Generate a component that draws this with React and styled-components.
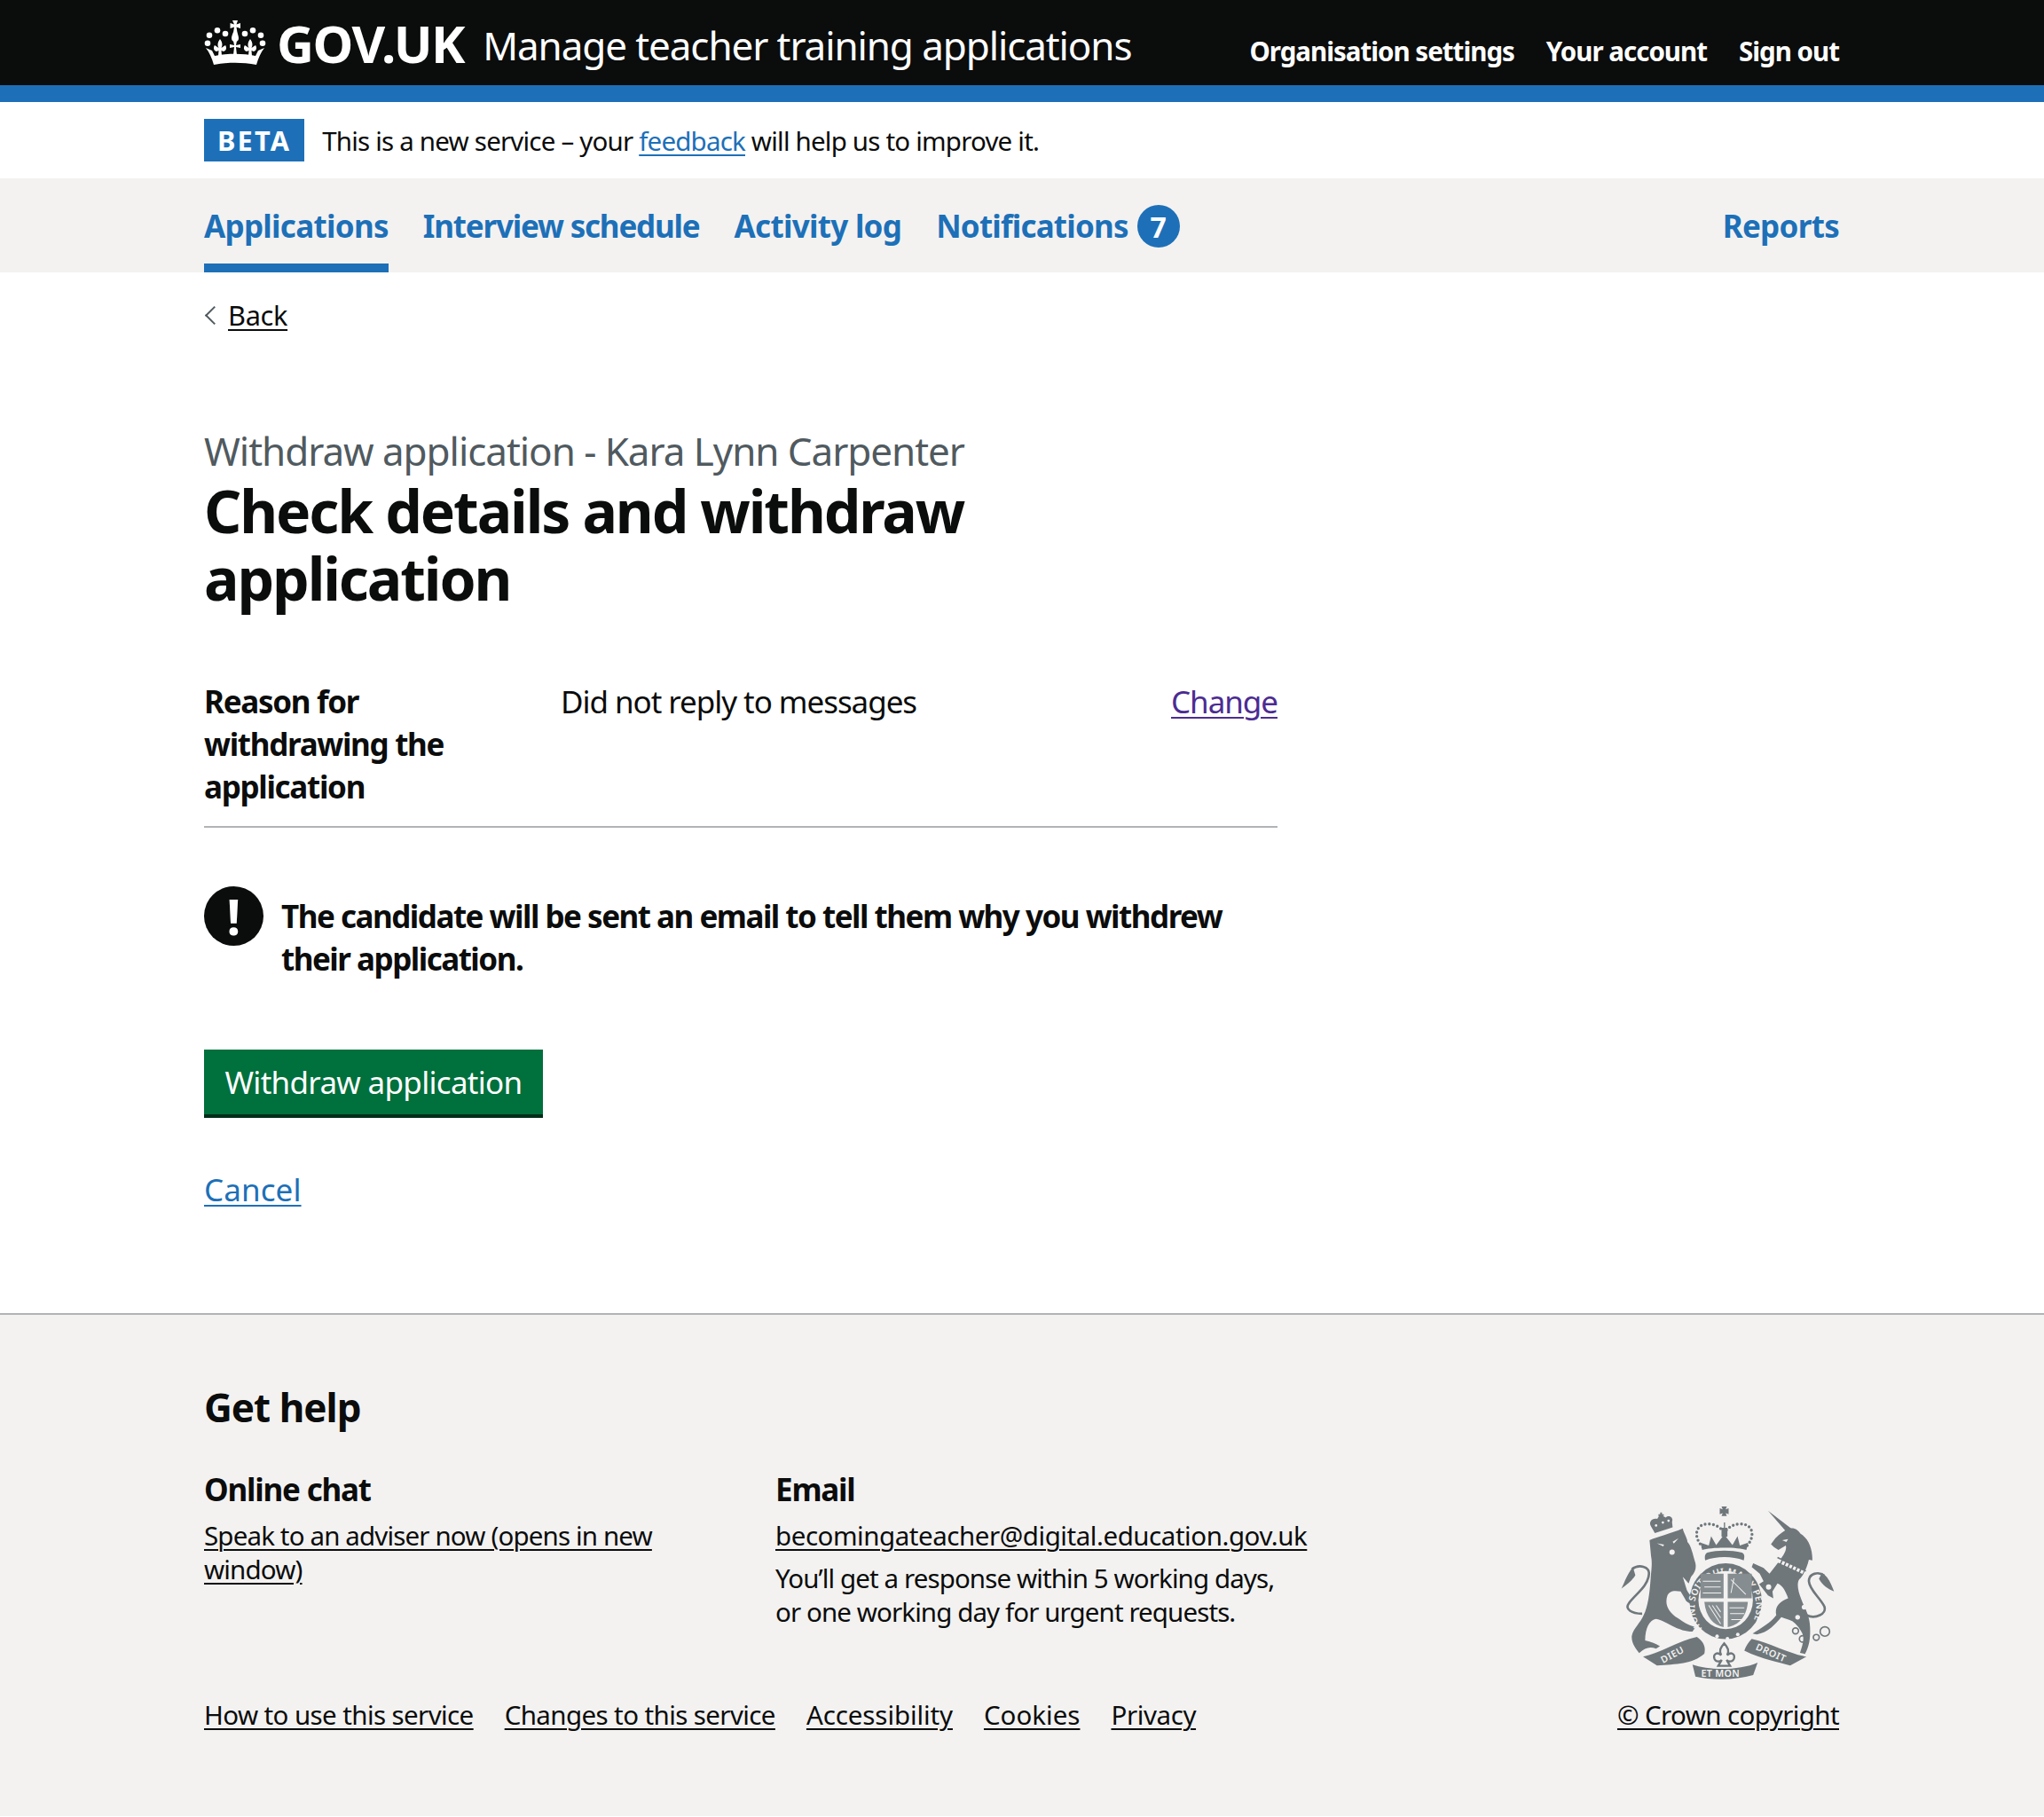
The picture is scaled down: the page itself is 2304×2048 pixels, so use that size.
import React from 'react';
import styled, { createGlobalStyle } from 'styled-components';

const GlobalStyle = createGlobalStyle`
  html, body {
    margin: 0;
    padding: 0;
    background: #fff;
    color: #0b0c0c;
    font-family: "Noto Sans", "Liberation Sans", sans-serif;
  }
`;

const Container = styled.div`
  width: 1843px;
  margin: 0 231px 0 230px;
`;

const Header = styled.header`
  background: #0b0c0c;
  border-bottom: 19px solid #1d70b8;
  height: 96px;
`;

const HeaderInner = styled(Container)`
  display: flex;
  align-items: center;
  height: 96px;
`;

const Logo = styled.div`
  display: flex;
  align-items: center;
  gap: 12px;
  color: #fff;
`;

const LogoText = styled.span`
  font-size: 58px;
  font-weight: 700;
  letter-spacing: -1.4px;
`;

const ServiceName = styled.span`
  color: #fff;
  font-size: 44px;
  letter-spacing: -1.1px;
  margin-left: 21px;
  padding-top: 6px;
`;

const HeaderNav = styled.nav`
  margin-left: auto;
  display: flex;
  gap: 36px;
  padding-top: 18px;
`;

const HeaderLink = styled.a`
  color: #fff;
  font-size: 29.5px;
  font-weight: 700;
  letter-spacing: -1px;
`;

const PhaseBanner = styled.div`
  height: 86px;
`;

const PhaseInner = styled(Container)`
  display: flex;
  align-items: center;
  gap: 20px;
  height: 86px;
`;

const PhaseTag = styled.strong`
  background: #1d70b8;
  color: #fff;
  font-size: 30.7px;
  letter-spacing: 2.2px;
  line-height: 48px;
  padding: 0 15px;
`;

const PhaseText = styled.span`
  font-size: 29.5px;
  letter-spacing: -0.8px;
`;

const TextLink = styled.a`
  color: ${(p) => p.$color || '#1d70b8'};
  text-decoration: underline;
  text-underline-offset: 4px;
  text-decoration-thickness: 2px;
`;

const PrimaryNav = styled.nav`
  background: #f3f2f1;
  height: 106px;
`;

const NavInner = styled(Container)`
  display: flex;
  gap: 39px;
  height: 106px;
`;

const NavItem = styled.a`
  display: flex;
  align-items: center;
  gap: 10px;
  height: 106px;
  box-sizing: border-box;
  color: #1d70b8;
  font-size: 35px;
  font-weight: 700;
  letter-spacing: ${(p) => p.$spacing || '-0.7px'};
  box-shadow: ${(p) => (p.$active ? 'inset 0 -10px 0 #1d70b8' : 'none')};
  margin-left: ${(p) => (p.$right ? 'auto' : '0')};
`;

const Badge = styled.span`
  width: 48px;
  height: 48px;
  margin-top: 2px;
  border-radius: 50%;
  background: #1d70b8;
  color: #fff;
  font-size: 32px;
  letter-spacing: 0;
  display: flex;
  align-items: center;
  justify-content: center;
`;

const BackLink = styled.a`
  display: flex;
  align-items: center;
  gap: 8px;
  height: 40px;
  margin-top: 28px;
  font-size: 30.7px;
  letter-spacing: -0.3px;
  color: #0b0c0c;
  text-decoration: underline;
  text-underline-offset: 4px;
  text-decoration-thickness: 2px;
`;

const Chevron = styled.span`
  width: 15px;
  height: 15px;
  margin-left: 4px;
  box-sizing: border-box;
  border-left: 2px solid #505a5f;
  border-bottom: 2px solid #505a5f;
  transform: rotate(45deg);
`;

const Main = styled.main`
  width: 1210px;
  padding-top: 105px;
  padding-bottom: 115px;
`;

const Caption = styled.span`
  display: block;
  color: #505a5f;
  font-size: 44px;
  letter-spacing: -1.05px;
  line-height: 56px;
`;

const Heading = styled.h1`
  margin: 1px 0 0;
  font-size: 66px;
  line-height: 76px;
  font-weight: 700;
  letter-spacing: -2.1px;
`;

const SummaryRow = styled.div`
  margin-top: 78px;
  display: grid;
  grid-template-columns: 402px 1fr auto;
  font-size: 35px;
  letter-spacing: -1.05px;
  line-height: 48px;
  padding-bottom: 20px;
  border-bottom: 2px solid #b1b4b6;
`;

const SummaryKey = styled.strong`
  padding-right: 40px;
  letter-spacing: -1.3px;
`;

const WarningText = styled.div`
  margin-top: 66px;
  display: flex;
  gap: 20px;
  font-size: 35px;
  line-height: 48px;
  font-weight: 700;
  letter-spacing: -1.5px;
`;

const WarningBody = styled.span`
  padding-top: 10px;
`;

const WarningIcon = styled.span`
  flex: none;
  width: 67px;
  height: 67px;
  border-radius: 50%;
  background: #0b0c0c;
  color: #fff;
  font-size: 56px;
  line-height: 67px;
  letter-spacing: 0;
  text-align: center;
`;

const PrimaryButton = styled.button`
  display: block;
  margin-top: 78px;
  width: 382px;
  height: 77px;
  box-sizing: border-box;
  border: 0;
  background: #00703c;
  box-shadow: inset 0 -4px 0 #002d18;
  color: #fff;
  font-family: inherit;
  font-size: 35px;
  letter-spacing: -0.7px;
  padding: 0 0 4px;
`;

const CancelRow = styled.div`
  margin-top: 57px;
  font-size: 35px;
  letter-spacing: 0.1px;
  line-height: 48px;
`;

const Footer = styled.footer`
  background: #f3f2f1;
  border-top: 2px solid #b1b4b6;
  height: 567px;
  box-sizing: border-box;
  padding-top: 76px;
`;

const FooterTitle = styled.h2`
  margin: 0;
  font-size: 44px;
  letter-spacing: -1px;
  line-height: 56px;
  font-weight: 700;
`;

const HelpRow = styled.div`
  display: flex;
  margin-top: 41px;
`;

const HelpColumn = styled.div`
  box-sizing: border-box;
  width: ${(p) => p.$width};
  padding-right: 40px;
  font-size: 29.5px;
  letter-spacing: -0.6px;
  line-height: 38px;
`;

const HelpTitle = styled.h3`
  margin: 0 0 9px;
  font-size: 35px;
  letter-spacing: -1.2px;
  line-height: 48px;
  font-weight: 700;
`;

const FooterLink = styled.a`
  color: #0b0c0c;
  font-size: 29.5px;
  letter-spacing: ${(p) => p.$spacing || '-0.6px'};
  text-decoration: underline;
  text-underline-offset: 4px;
  text-decoration-thickness: 2px;
`;

const ChatLink = styled(FooterLink)`
  letter-spacing: -0.85px;
`;

const EmailLink = styled(FooterLink)`
  letter-spacing: -0.45px;
  white-space: nowrap;
`;

const HelpText = styled.p`
  margin: 10px 0 0;
  letter-spacing: -0.9px;
  white-space: nowrap;
`;

const CrestColumn = styled.div`
  margin-left: auto;
  margin-right: 5px;
  margin-top: 42px;
`;

const FooterBottom = styled.div`
  display: flex;
  align-items: center;
  gap: 35px;
  margin-top: 15px;
  line-height: 38px;
`;

const Copyright = styled(FooterLink)`
  margin-left: auto;
`;

const FLEUR = 'M0 -10C3 -6 3 -3 1.5 0L6 -3C8 0 7 3 4 4L1.5 3L2 9L-2 9L-1.5 3L-4 4C-7 3 -8 0 -6 -3L-1.5 0C-3 -3 -3 -6 0 -10Z';

const Crown = () => (
  <svg width="70" height="50" viewBox="0 0 70 50" fill="#fff" aria-hidden="true">
    <path d="M32 0h6l-1.5 4.5 4.5-1.5v6l-4.5-1.5 .8 5C38 16 39 18 39 20a4 4 0 0 1-8 0c0-2 1-4 2.200-7.500l.8-5L29.500 9V3L34 4.500z" />
    <circle cx="24" cy="15" r="3.300" />
    <circle cx="15" cy="11.300" r="3.300" />
    <circle cx="6" cy="16.700" r="3.300" />
    <circle cx="4" cy="25.700" r="3.300" />
    <circle cx="46" cy="15" r="3.300" />
    <circle cx="55" cy="11.300" r="3.300" />
    <circle cx="64" cy="16.700" r="3.300" />
    <circle cx="66" cy="25.700" r="3.300" />
    <path d={FLEUR} transform="translate(18 31)" />
    <path d={FLEUR} transform="translate(52 31)" />
    <path d="M-2 -8h4l-1 5 5-1v4l-5-1 1 9h-4l1-9-5 1v-4l5 1z" transform="translate(35 31)" />
    <path d="M11 50C9 43 6 36 2 31L9 34 12 40C26 37 44 37 58 40L61 34 68 31C64 36 61 43 59 50 43 47 27 47 11 50Z" />
  </svg>
);

const INK = '#6f777b';
const PAPER = '#f3f2f1';

// coordinates follow a 3x crop of the crest
const Crest = () => (
  <svg width="242" height="197" viewBox="140 55 725 590" fill={INK} aria-hidden="true">
    {/* lion */}
    <path d="M240 172C265 160 310 150 352 132 356 150 368 165 368 178 380 190 385 215 395 250 398 265 395 280 380 295L372 318 352 295 366 340C375 360 395 370 408 392L395 400C385 385 365 385 360 370L345 345C320 340 305 345 300 360 290 390 305 415 335 435 350 445 370 460 395 465L385 480C360 480 340 472 325 465 300 455 280 440 262 438 240 440 225 470 225 510 245 515 262 520 275 530L262 538C240 530 225 535 205 553 195 540 178 520 180 495 185 470 210 450 220 425 235 395 240 350 243 310 246 270 250 250 245 225Z" />
    <path d="M215 420C180 420 155 405 170 385 190 355 235 330 238 285 240 262 205 250 180 270" fill="none" stroke={INK} strokeWidth="8" />
    <path d="M184 262C165 285 155 315 145 335 165 320 180 310 192 290Z" />
    <path d="M258 148L318 128 316 110C322 95 305 85 295 95L275 85 266 100C250 95 235 110 245 125Z" />
    <path d="M270 84h6v-6h6v6h6v6h-6v8h-6v-8h-6z" />
    <g fill={PAPER}>
      <circle cx="316" cy="212" r="9" />
      <path d="M265 182l24 5-3 6zM338 165l-20 12 4 6z" />
      <circle cx="262" cy="122" r="4" /><circle cx="285" cy="112" r="4" /><circle cx="304" cy="106" r="4" />
    </g>

    {/* royal crown */}
    <path d="M420 195C385 160 395 115 440 117 465 118 480 130 492 145 505 130 520 118 545 117 590 115 600 160 565 195" fill="none" stroke={INK} strokeWidth="10" strokeLinecap="round" strokeDasharray="0 14" />
    <path d="M418 205L412 180 440 190 448 158 465 188 492 152 520 188 537 158 545 190 573 180 567 205C540 195 445 195 418 205Z" />
    <path d="M428 240C425 225 428 218 435 214 470 205 515 205 552 214 560 218 562 225 558 240 520 225 465 225 428 240Z" />
    <path d="M483 130h8v-18h4v18h8v30h-20z" />
    <path d="M483 58h18l-4 10 10-4v20l-10-4 4 10h-18l4-10-10 4v-20l10 4z" />

    {/* garter and shield */}
    <ellipse cx="497" cy="378" rx="122" ry="128" />
    <ellipse cx="497" cy="374" rx="92" ry="98" fill={PAPER} />
    <path id="garter" d="M425 478A104 110 0 1 1 575 470" fill="none" stroke="none" />
    <text fontFamily="Noto Sans, sans-serif" fontSize="31" fontWeight="600" fill={PAPER} letterSpacing="1">
      <textPath href="#garter" startOffset="2%">HONI SOIT QUI MAL Y PENSE</textPath>
    </text>
    <path d="M412 285H490V368H412ZM504 285H585V368H504Z" fill="#868d90" />
    <path d="M425 380H490V465C455 460 430 430 425 380ZM504 380H572C568 430 540 460 504 465Z" fill="#868d90" />
    <g stroke={PAPER} strokeWidth="3" fill="none">
      <path d="M420 310h60M425 330h55M420 350h62M515 305l50 50M525 300l-10 50M510 400h50M512 420h48M516 440h35" />
      <path d="M440 392l40 62M452 392l28 42M465 392l15 22" />
    </g>
    <circle cx="468" cy="496" r="6" fill={PAPER} />
    <circle cx="503" cy="504" r="6" fill={PAPER} />
    <circle cx="538" cy="490" r="6" fill={PAPER} />

    {/* unicorn */}
    <path d="M640 72L722 135 705 147Z" />
    <path d="M705 135C725 125 740 135 750 150 775 165 790 195 790 240L778 238C772 262 765 280 750 300 735 310 740 340 752 370 760 395 780 420 782 465 783 495 782 525 765 556L748 552C755 530 765 505 755 485 745 465 735 455 722 445 710 440 700 438 685 432 665 455 640 485 602 490L588 487C615 470 650 450 668 425 660 395 685 375 708 368 700 345 690 325 672 318L655 345 658 368 640 358 610 320 625 310 612 285 585 262 590 250 625 265 645 285 680 240C690 225 705 205 700 190L675 205 660 195 650 185 665 165C680 150 695 140 705 135Z" />
    <path d="M770 425C800 440 840 420 830 395 815 365 780 340 778 310 778 285 810 275 830 292" fill="none" stroke={INK} strokeWidth="8" />
    <path d="M822 282C845 295 855 325 863 345 840 335 825 325 812 302Z" />
    <path d="M675 240L765 282" stroke={PAPER} strokeWidth="14" strokeDasharray="9 5" />
    <path d="M672 230L768 276" stroke={INK} strokeWidth="5" />
    <g fill={PAPER}>
      <circle cx="740" cy="432" r="8" /><circle cx="762" cy="398" r="8" /><circle cx="772" cy="352" r="9" />
      <circle cx="652" cy="248" r="9" /><circle cx="642" cy="330" r="9" />
      <path d="M688 172l20-4-6 10z" />
    </g>
    <g fill="none" stroke={INK} strokeWidth="5">
      <circle cx="733" cy="478" r="10" /><circle cx="757" cy="505" r="11" />
      <circle cx="803" cy="500" r="10" /><circle cx="832" cy="480" r="16" />
    </g>

    {/* motto ribbon */}
    <path d="M218 565C270 555 340 510 400 498 425 515 430 535 425 555 385 590 330 590 265 595Z" />
    <path d="M385 592C440 612 545 612 605 585L590 627C530 645 450 645 395 632Z" />
    <path d="M585 505C650 520 710 555 770 565L715 595C680 585 620 575 560 545 565 530 575 515 585 505Z" />
    <path d="M492 520C505 535 510 545 502 560 515 548 530 555 525 572 520 585 505 582 500 576L512 596H472L484 576C479 582 464 585 459 572 454 555 469 548 482 560 474 545 479 535 492 520Z" fill={PAPER} stroke={INK} strokeWidth="7" />
    <g fontFamily="Noto Sans, sans-serif" fontWeight="600" fontSize="32" fill={PAPER}>
      <text transform="translate(285 588) rotate(-28)" letterSpacing="2">DIEU</text>
      <text x="414" y="632" letterSpacing="1">ET MON</text>
      <text transform="translate(596 540) rotate(24)" letterSpacing="2">DROIT</text>
    </g>
  </svg>
);

export default function App() {
  return (
    <>
      <GlobalStyle />
      <Header>
        <HeaderInner>
          <Logo>
            <Crown />
            <LogoText>GOV.UK</LogoText>
          </Logo>
          <ServiceName>Manage teacher training applications</ServiceName>
          <HeaderNav>
            <HeaderLink>Organisation settings</HeaderLink>
            <HeaderLink>Your account</HeaderLink>
            <HeaderLink>Sign out</HeaderLink>
          </HeaderNav>
        </HeaderInner>
      </Header>
      <PhaseBanner>
        <PhaseInner>
          <PhaseTag>BETA</PhaseTag>
          <PhaseText>
            This is a new service – your <TextLink>feedback</TextLink> will help us to improve it.
          </PhaseText>
        </PhaseInner>
      </PhaseBanner>
      <PrimaryNav>
        <NavInner>
          <NavItem $active>Applications</NavItem>
          <NavItem $spacing="-1.2px">Interview schedule</NavItem>
          <NavItem>Activity log</NavItem>
          <NavItem $spacing="-0.8px">Notifications <Badge>7</Badge></NavItem>
          <NavItem $right>Reports</NavItem>
        </NavInner>
      </PrimaryNav>
      <Container>
        <BackLink><Chevron />Back</BackLink>
        <Main>
          <Caption>Withdraw application - Kara Lynn Carpenter</Caption>
          <Heading>Check details and withdraw application</Heading>
          <SummaryRow>
            <SummaryKey>Reason for withdrawing the application</SummaryKey>
            <span>Did not reply to messages</span>
            <TextLink $color="#4c2c92">Change</TextLink>
          </SummaryRow>
          <WarningText>
            <WarningIcon>!</WarningIcon>
            <WarningBody>The candidate will be sent an email to tell them why you withdrew their application.</WarningBody>
          </WarningText>
          <PrimaryButton>Withdraw application</PrimaryButton>
          <CancelRow><TextLink>Cancel</TextLink></CancelRow>
        </Main>
      </Container>
      <Footer>
        <Container>
          <FooterTitle>Get help</FooterTitle>
          <HelpRow>
            <HelpColumn $width="644px">
              <HelpTitle>Online chat</HelpTitle>
              <ChatLink>Speak to an adviser now (opens in new window)</ChatLink>
            </HelpColumn>
            <HelpColumn $width="620px">
              <HelpTitle>Email</HelpTitle>
              <EmailLink>becomingateacher@digital.education.gov.uk</EmailLink>
              <HelpText>You’ll get a response within 5 working days,<br />or one working day for urgent requests.</HelpText>
            </HelpColumn>
            <CrestColumn><Crest /></CrestColumn>
          </HelpRow>
          <FooterBottom>
            <FooterLink>How to use this service</FooterLink>
            <FooterLink>Changes to this service</FooterLink>
            <FooterLink $spacing="-0.1px">Accessibility</FooterLink>
            <FooterLink $spacing="0">Cookies</FooterLink>
            <FooterLink $spacing="-0.4px">Privacy</FooterLink>
            <Copyright>© Crown copyright</Copyright>
          </FooterBottom>
        </Container>
      </Footer>
    </>
  );
}
